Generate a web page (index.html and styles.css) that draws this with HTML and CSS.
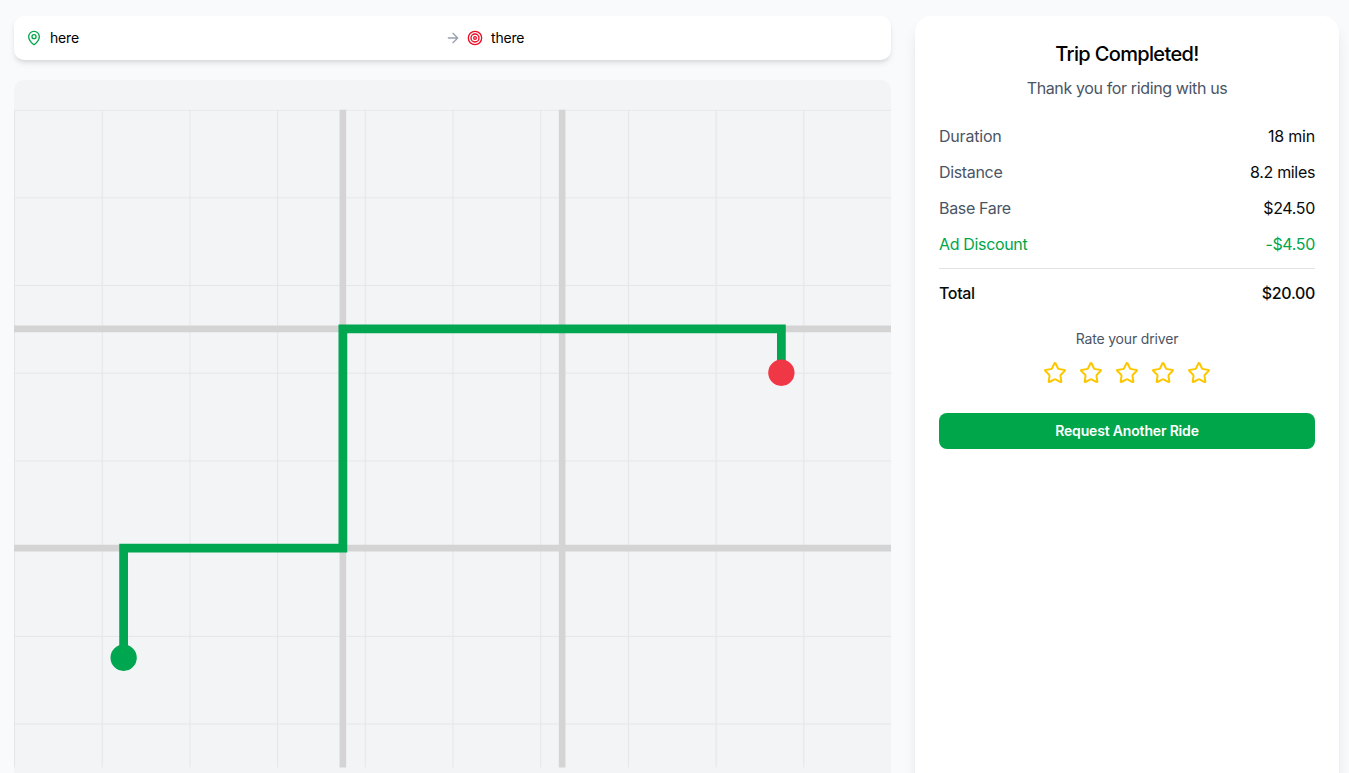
FILE: index.html
```html
<!DOCTYPE html>
<html lang="en">
<head>
<meta charset="utf-8">
<title>Trip Completed</title>
<link rel="stylesheet" href="styles.css">
</head>
<body>
<div class="page">
  <main class="trip">
    <section class="route">
      <div class="place">
        <svg class="icon pin" viewBox="0 0 24 24"><path d="M20 10c0 4.993-5.539 10.193-7.399 11.799a1 1 0 0 1-1.202 0C9.539 20.193 4 14.993 4 10a8 8 0 0 1 16 0"/><circle cx="12" cy="10" r="3"/></svg>
        <span>here</span>
      </div>
      <svg class="icon arrow" viewBox="0 0 24 24"><path d="M5 12h14M12 5l7 7-7 7"/></svg>
      <div class="place">
        <svg class="icon target" viewBox="0 0 24 24"><circle cx="12" cy="12" r="10"/><circle cx="12" cy="12" r="6"/><circle cx="12" cy="12" r="2"/></svg>
        <span>there</span>
      </div>
    </section>
    <section class="map">
      <svg class="map-canvas" viewBox="0 0 400 300">
        <defs>
          <pattern id="grid" width="40" height="40" patternUnits="userSpaceOnUse"><path class="grid-line" d="M40 0H0V40"/></pattern>
        </defs>
        <rect width="400" height="300" fill="url(#grid)"/>
        <path class="road" d="M0 100H400M0 200H400M150 0V300M250 0V300"/>
        <path class="path" d="M50 250V200H150V100H350V120"/>
        <circle class="start" cx="50" cy="250" r="6"/>
        <circle class="end" cx="350" cy="120" r="6"/>
      </svg>
    </section>
  </main>
  <aside class="summary">
    <h1 class="title">Trip Completed!</h1>
    <p class="thanks">Thank you for riding with us</p>
    <dl class="fares">
      <div class="row"><dt>Duration</dt><dd>18 min</dd></div>
      <div class="row"><dt>Distance</dt><dd>8.2 miles</dd></div>
      <div class="row"><dt>Base Fare</dt><dd>$24.50</dd></div>
      <div class="row discount"><dt>Ad Discount</dt><dd>-$4.50</dd></div>
      <div class="row total"><dt>Total</dt><dd>$20.00</dd></div>
    </dl>
    <p class="rate">Rate your driver</p>
    <svg class="defs"><symbol id="star" viewBox="0 0 24 24"><path d="M11.525 2.295a.53.53 0 0 1 .95 0l2.31 4.679a2.123 2.123 0 0 0 1.595 1.16l5.166.756a.53.53 0 0 1 .294.904l-3.736 3.638a2.123 2.123 0 0 0-.611 1.878l.882 5.14a.53.53 0 0 1-.771.56l-4.618-2.428a2.122 2.122 0 0 0-1.973 0L6.396 21.01a.53.53 0 0 1-.77-.56l.881-5.139a2.122 2.122 0 0 0-.611-1.879L2.16 9.795a.53.53 0 0 1 .294-.906l5.165-.755a2.122 2.122 0 0 0 1.597-1.16z"/></symbol></svg>
    <div class="stars">
      <svg class="star"><use href="#star"/></svg>
      <svg class="star"><use href="#star"/></svg>
      <svg class="star"><use href="#star"/></svg>
      <svg class="star"><use href="#star"/></svg>
      <svg class="star"><use href="#star"/></svg>
    </div>
    <button class="again">Request Another Ride</button>
  </aside>
</div>
</body>
</html>
```
FILE: styles.css
```css
* { box-sizing: border-box; margin: 0; padding: 0; }
body { background: #f9fafc; color: #0a0a0a; font: 16px/24px Inter, sans-serif; overflow: hidden; }
svg { fill: none; stroke-linecap: round; stroke-linejoin: round; }
.page { height: 773px; overflow: hidden; display: grid; grid-template-columns: 877px 424px; column-gap: 24px; padding: 16px 10px 0 14px; }
.trip { display: flex; flex-direction: column; gap: 20px; }
.route { height: 44px; flex: none; display: flex; align-items: center; gap: 6.5px; padding: 0 12px; background: #fff; border-radius: 10px; box-shadow: 0 4px 6px -1px rgba(0,0,0,.1), 0 2px 4px -2px rgba(0,0,0,.1); }
.place { flex: 1; display: flex; align-items: center; gap: 8px; font-size: 14px; line-height: 20px; color: #000; letter-spacing: -.2px; }
.icon { width: 16px; height: 16px; flex: none; stroke-width: 2; }
.pin { stroke: #00a64a; }
.arrow { stroke: #99a1af; }
.target { stroke: #ec0a24; }
.map { height: 717px; flex: none; background: #f3f4f6; border-radius: 10px; overflow: hidden; }
.map-canvas { display: block; width: 100%; height: 100%; stroke-linecap: butt; stroke-linejoin: miter; }
.grid-line { stroke: #e5e6e7; stroke-width: 1; }
.road { stroke: #d4d4d4; stroke-width: 3; }
.path { stroke: #00a650; stroke-width: 4; }
.start { fill: #00a650; }
.end { fill: #ef3746; }
.summary { height: 800px; padding: 24px; background: #fff; border-radius: 16px; box-shadow: 0 10px 15px -3px rgba(0,0,0,.1), 0 4px 6px -4px rgba(0,0,0,.1); }
.title { font-size: 20px; line-height: 28px; font-weight: 500; text-align: center; letter-spacing: -.65px; color: #000; }
.thanks { margin-top: 8px; text-align: center; color: #4a5565; letter-spacing: -.37px; }
.fares { margin-top: 24px; display: flex; flex-direction: column; gap: 12px; letter-spacing: -.34px; }
.row { display: flex; justify-content: space-between; }
.row dt { color: #4a5565; }
.row:first-child { letter-spacing: -.2px; }
.row.discount dt, .row.discount dd { color: #00a64a; }
.row.total { border-top: 1px solid #e2e3e5; padding-top: 12px; font-weight: 500; }
.row.total dt { color: #0a0a0a; }
.rate { margin-top: 24px; text-align: center; font-size: 14px; line-height: 20px; color: #4a5565; letter-spacing: -.17px; }
.defs { display: none; }
.stars { margin-top: 12px; display: flex; justify-content: center; gap: 12px; }
.star { width: 24px; height: 24px; stroke: #fdc700; stroke-width: 2; }
.again { display: block; width: 100%; height: 36px; margin-top: 28px; border: 0; border-radius: 8px; background: #00a64a; color: #fff; font: 600 14px/20px Inter, sans-serif; letter-spacing: -.17px; }
```
